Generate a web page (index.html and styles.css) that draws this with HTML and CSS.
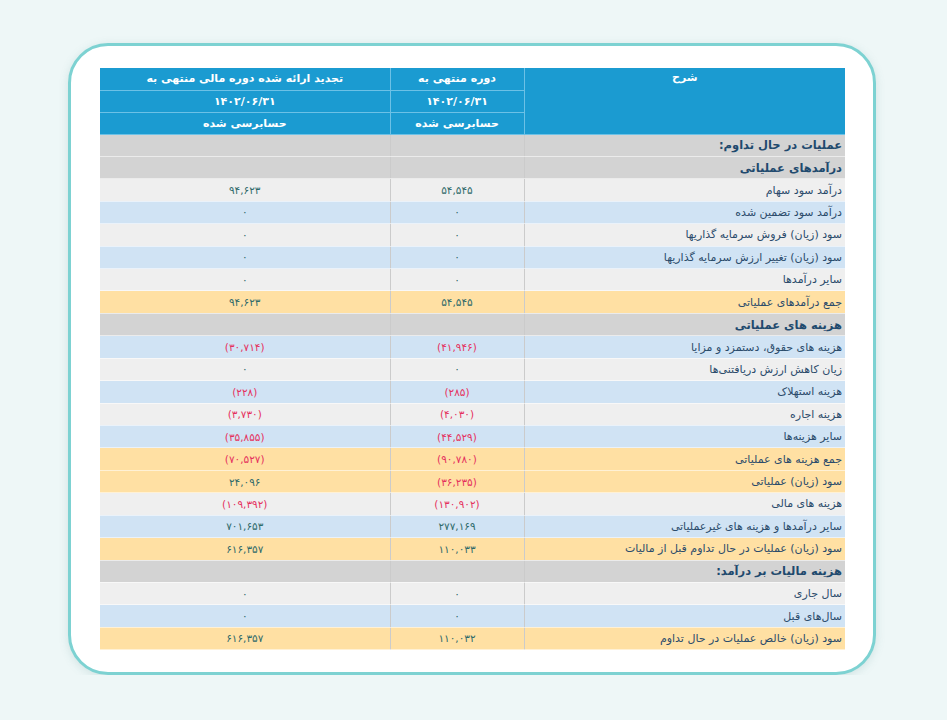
FILE: index.html
```html
<!DOCTYPE html>
<html lang="fa" dir="rtl">
<head>
    <meta charset="UTF-8">
    <title>صورت سود و زیان</title>
    <link rel="stylesheet" href="styles.css">
</head>
<body>
    <div class="card">
        <table class="report">
            <thead>
                <tr>
                    <th rowspan="3" class="desc-head">شرح</th>
                    <th>دوره منتهی به</th>
                    <th>تجدید ارائه شده دوره مالی منتهی به</th>
                </tr>
                <tr>
                    <th>۱۴۰۲/۰۶/۳۱</th>
                    <th>۱۴۰۲/۰۶/۳۱</th>
                </tr>
                <tr>
                    <th>حسابرسی شده</th>
                    <th>حسابرسی شده</th>
                </tr>
            </thead>
            <tbody>
                <tr class="section"><td>عملیات در حال تداوم:</td><td></td><td></td></tr>
                <tr class="section"><td>درآمدهای عملیاتی</td><td></td><td></td></tr>
                <tr class="light"><td>درآمد سود سهام</td><td>۵۴,۵۴۵</td><td>۹۴,۶۲۳</td></tr>
                <tr class="blue"><td>درآمد سود تضمین شده</td><td>۰</td><td>۰</td></tr>
                <tr class="light"><td>سود (زیان) فروش سرمایه گذاریها</td><td>۰</td><td>۰</td></tr>
                <tr class="blue"><td>سود (زیان) تغییر ارزش سرمایه گذاریها</td><td>۰</td><td>۰</td></tr>
                <tr class="light"><td>سایر درآمدها</td><td>۰</td><td>۰</td></tr>
                <tr class="total"><td>جمع درآمدهای عملیاتی</td><td>۵۴,۵۴۵</td><td>۹۴,۶۲۳</td></tr>
                <tr class="section"><td>هزینه های عملیاتی</td><td></td><td></td></tr>
                <tr class="blue"><td>هزینه های حقوق، دستمزد و مزایا</td><td class="neg">(۴۱,۹۴۶)</td><td class="neg">(۳۰,۷۱۴)</td></tr>
                <tr class="light"><td>زیان کاهش ارزش دریافتنی‌ها</td><td>۰</td><td>۰</td></tr>
                <tr class="blue"><td>هزینه استهلاک</td><td class="neg">(۲۸۵)</td><td class="neg">(۲۲۸)</td></tr>
                <tr class="light"><td>هزینه اجاره</td><td class="neg">(۴,۰۳۰)</td><td class="neg">(۳,۷۳۰)</td></tr>
                <tr class="blue"><td>سایر هزینه‌ها</td><td class="neg">(۴۴,۵۲۹)</td><td class="neg">(۳۵,۸۵۵)</td></tr>
                <tr class="total"><td>جمع هزینه های عملیاتی</td><td class="neg">(۹۰,۷۸۰)</td><td class="neg">(۷۰,۵۲۷)</td></tr>
                <tr class="total"><td>سود (زیان) عملیاتی</td><td class="neg">(۳۶,۲۳۵)</td><td>۲۴,۰۹۶</td></tr>
                <tr class="light"><td>هزینه های مالی</td><td class="neg">(۱۳۰,۹۰۲)</td><td class="neg">(۱۰۹,۳۹۲)</td></tr>
                <tr class="blue"><td>سایر درآمدها و هزینه های غیرعملیاتی</td><td>۲۷۷,۱۶۹</td><td>۷۰۱,۶۵۳</td></tr>
                <tr class="total"><td>سود (زیان) عملیات در حال تداوم قبل از مالیات</td><td>۱۱۰,۰۳۳</td><td>۶۱۶,۳۵۷</td></tr>
                <tr class="section"><td>هزینه مالیات بر درآمد:</td><td></td><td></td></tr>
                <tr class="light"><td>سال جاری</td><td>۰</td><td>۰</td></tr>
                <tr class="blue"><td>سال‌های قبل</td><td>۰</td><td>۰</td></tr>
                <tr class="total"><td>سود (زیان) خالص عملیات در حال تداوم</td><td>۱۱۰,۰۳۲</td><td>۶۱۶,۳۵۷</td></tr>
            </tbody>
        </table>
    </div>
</body>
</html>
```

FILE: styles.css
```css
* {
    margin: 0;
    padding: 0;
    box-sizing: border-box;
}
body {
    background-color: #eef7f7;
    font-family: "DejaVu Sans", sans-serif;
    padding: 43px 0 0;
}
.card {
    width: 808px;
    height: 632px;
    margin: 0 auto 0 68px;
    padding: 22px 28px 0 28px;
    background-color: #ffffff;
    border: 3px solid #7dd2d2;
    border-radius: 40px;
    box-shadow: 0 2px 10px rgba(80, 140, 140, 0.18);
}
.report {
    width: 745px;
    border-collapse: collapse;
    table-layout: fixed;
}
.report th {
    height: 22px;
    background-color: #1b9bd1;
    color: #ffffff;
    font-size: 11px;
    font-weight: bold;
    text-align: center;
    vertical-align: middle;
    border: 1px solid #6cc1e6;
    border-top: none;
}
.report th.desc-head {
    width: 321px;
    vertical-align: top;
    padding-top: 3px;
    border-right: none;
}
.report thead tr:first-child th:nth-child(2) {
    width: 134px;
}
.report thead tr th:last-child {
    border-left: none;
}
.report td {
    height: 22.43px;
    font-size: 10.5px;
    color: #2f6a6a;
    text-align: center;
    vertical-align: middle;
    border-bottom: 1px solid rgba(255, 255, 255, 0.55);
    border-left: 1px solid #cbcbcb;
}
.report td:first-child {
    text-align: right;
    padding-right: 3px;
    color: #2b4b6b;
    font-size: 11px;
}
.report td:last-child {
    border-left: none;
}
.report td.neg {
    color: #e5315e;
}
.section td {
    background-color: #d3d3d3;
}
.section td:first-child {
    font-weight: bold;
    font-size: 11.5px;
    color: #1f4a6e;
}
.light td {
    background-color: #efefef;
}
.blue td {
    background-color: #d0e3f4;
}
.total td {
    background-color: #ffe0a3;
}
```
